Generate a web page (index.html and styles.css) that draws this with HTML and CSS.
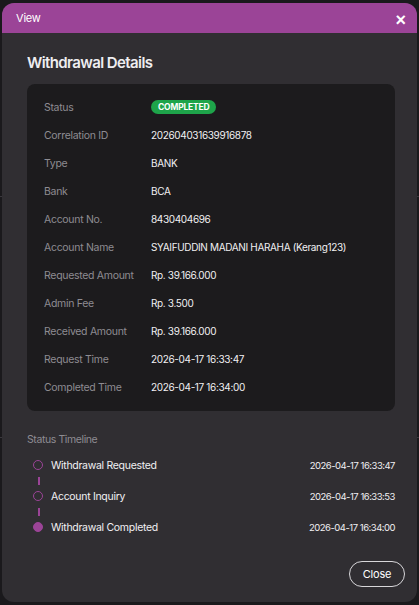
FILE: index.html
```html
<!DOCTYPE html>
<html lang="en">
<head>
  <meta charset="UTF-8" />
  <meta name="viewport" content="width=device-width, initial-scale=1.0"/>
  <title>View - Withdrawal Details</title>
  <link rel="stylesheet" href="styles.css">
</head>
<body>
  <div class="modal">
    <div class="modal-head">
      <span class="modal-title">View</span>
      <button class="modal-x">&times;</button>
    </div>

    <div class="modal-body">
      <h2>Withdrawal Details</h2>

      <div class="details">
        <div class="row"><span class="label">Status</span><span class="value"><span class="badge">COMPLETED</span></span></div>
        <div class="row"><span class="label">Correlation ID</span><span class="value">202604031639916878</span></div>
        <div class="row"><span class="label">Type</span><span class="value">BANK</span></div>
        <div class="row"><span class="label">Bank</span><span class="value">BCA</span></div>
        <div class="row"><span class="label">Account No.</span><span class="value">8430404696</span></div>
        <div class="row"><span class="label">Account Name</span><span class="value">SYAIFUDDIN MADANI HARAHA (Kerang123)</span></div>
        <div class="row"><span class="label">Requested Amount</span><span class="value">Rp. 39.166.000</span></div>
        <div class="row"><span class="label">Admin Fee</span><span class="value">Rp. 3.500</span></div>
        <div class="row"><span class="label">Received Amount</span><span class="value">Rp. 39.166.000</span></div>
        <div class="row"><span class="label">Request Time</span><span class="value">2026-04-17 16:33:47</span></div>
        <div class="row"><span class="label">Completed Time</span><span class="value">2026-04-17 16:34:00</span></div>
      </div>

      <div class="timeline-title">Status Timeline</div>
      <div class="timeline">
        <div class="step">
          <span class="dot"></span>
          <span class="step-name">Withdrawal Requested</span>
          <span class="step-time">2026-04-17 16:33:47</span>
        </div>
        <div class="link"></div>
        <div class="step">
          <span class="dot"></span>
          <span class="step-name">Account Inquiry</span>
          <span class="step-time">2026-04-17 16:33:53</span>
        </div>
        <div class="link"></div>
        <div class="step">
          <span class="dot done"></span>
          <span class="step-name">Withdrawal Completed</span>
          <span class="step-time">2026-04-17 16:34:00</span>
        </div>
      </div>
    </div>

    <div class="modal-foot">
      <button class="btn-close">Close</button>
    </div>
  </div>
</body>
</html>
```

FILE: styles.css
```css
:root {
  --purple: #9b4497;
  --panel: #302e32;
  --card: #1c1b1d;
  --muted: #8e8c92;
  --text: #f1f0f2;
}

body {
  margin: 0;
  height: 605px;
  overflow: hidden;
  font-family: 'Inter', 'Open Sans', sans-serif;
  background: #1a191c;
  background-image: repeating-linear-gradient(to bottom, transparent 0, transparent 196px, #3a383d 196px, #3a383d 197px, transparent 197px, transparent 241px);
  color: var(--text);
}

.modal {
  margin: 3px 2px;
  height: 599px;
  background: var(--panel);
  border-radius: 12px;
  overflow: hidden;
  display: flex;
  flex-direction: column;
}

.modal-head {
  height: 30px;
  background: var(--purple);
  display: flex;
  align-items: center;
  justify-content: space-between;
  padding: 0 11px 0 14px;
}
.modal-title {
  font-size: 11px;
  letter-spacing: -0.2px;
  color: #fff;
}
.modal-x {
  background: none;
  border: none;
  color: #fff;
  font-size: 18px;
  font-weight: 700;
  line-height: 1;
  padding: 0;
  margin-top: 3px;
  cursor: pointer;
}

.modal-body {
  flex: 1;
  padding: 20px 22px 0 25px;
}

h2 {
  margin: 0 0 11px;
  font-size: 15px;
  line-height: 20px;
  font-weight: 600;
  letter-spacing: -0.6px;
  color: #eeedf0;
}

.details {
  background: var(--card);
  border-radius: 8px;
  padding: 9px 17px 10px;
}
.row {
  display: flex;
  align-items: center;
  height: 28px;
}
.label {
  width: 107px;
  font-size: 10.5px;
  letter-spacing: -0.3px;
  color: var(--muted);
}
.value {
  font-size: 10px;
  letter-spacing: -0.35px;
  color: var(--text);
}
.badge {
  display: inline-block;
  background: #1ea44a;
  color: #fff;
  font-size: 8.5px;
  font-weight: 700;
  letter-spacing: -0.2px;
  padding: 2px 7px;
  border-radius: 8px;
}

.timeline-title {
  margin-top: 22px;
  font-size: 10.5px;
  line-height: 14px;
  letter-spacing: -0.4px;
  color: var(--muted);
}
.timeline {
  margin-top: 12px;
  padding-left: 6px;
}
.step {
  display: flex;
  align-items: center;
  height: 12px;
}
.dot {
  width: 8px;
  height: 8px;
  border: 1.5px solid var(--purple);
  border-radius: 50%;
  margin-right: 8px;
  flex-shrink: 0;
}
.dot.done { background: var(--purple); }
.step-name {
  flex: 1;
  font-size: 10.5px;
  letter-spacing: -0.3px;
}
.step-time {
  font-size: 9.5px;
  letter-spacing: -0.5px;
}
.link {
  height: 19px;
  display: flex;
  align-items: center;
  padding-left: 5px;
}
.link::before {
  content: "";
  width: 2px;
  height: 8px;
  background: var(--purple);
}

.modal-foot {
  display: flex;
  justify-content: flex-end;
  padding: 0 12px 15px;
}
.btn-close {
  width: 56px;
  height: 26px;
  background: none;
  border: 1.5px solid #d8d7da;
  border-radius: 13px;
  color: #fff;
  font-family: inherit;
  font-size: 11px;
  letter-spacing: -0.2px;
  cursor: pointer;
}
```
